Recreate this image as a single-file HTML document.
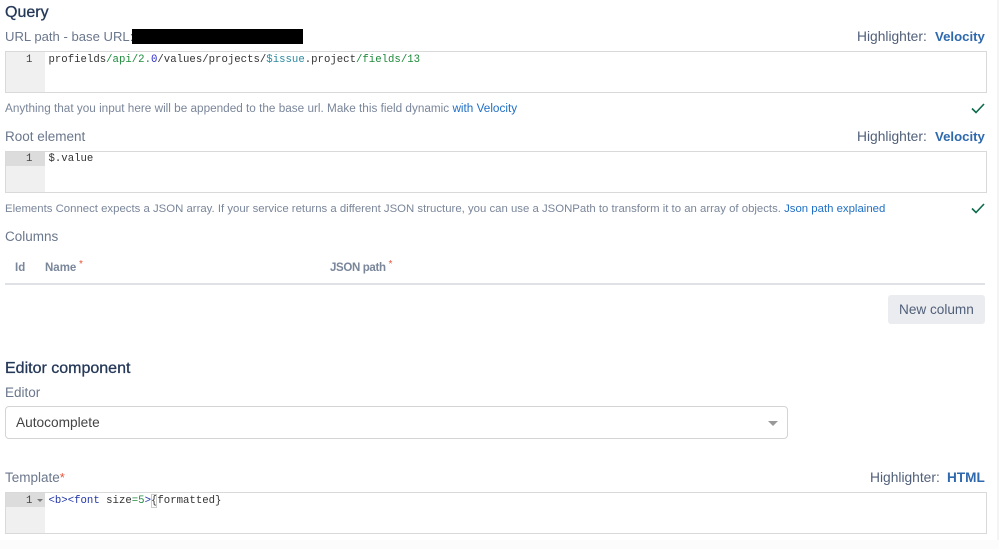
<!DOCTYPE html>
<html><head><meta charset="utf-8"><style>
html,body{margin:0;padding:0;background:#fff}
body{width:999px;height:549px;position:relative;overflow:hidden;font-family:"Liberation Sans",sans-serif}
.t{position:absolute;white-space:nowrap;line-height:16px}
.h{color:#253858;font-size:16px;font-weight:400;-webkit-text-stroke:.3px #253858}
.l{color:#6b778c;font-size:13.5px}
.d{color:#7a869a;font-size:11.75px}
.a{color:#1f6fc4}
.hl{color:#505f79;font-size:13.8px}
.v{color:#2f69ad;font-size:13.2px;font-weight:700}
.box{position:absolute;left:5px;width:980px;height:40px;border:1px solid #d9d9d9;background:#fff}
.gut{position:absolute;left:0;top:0;width:39px;height:40px;background:#f0f0f0}
.act{position:absolute;left:0;top:0;width:39px;height:14px;background:#dcdcdc}
.n{position:absolute;left:20px;top:0;font:10.67px/14px "Liberation Mono",monospace;color:#444}
.c{position:absolute;left:42.5px;top:0;font:10.67px/14px "Liberation Mono",monospace;color:#333;white-space:pre;letter-spacing:.01px}
.g{color:#1e8a3c}.b{color:#2a2ac8}.tl{color:#2b8a9e}.tg{color:#2236a8}
.th{color:#7a869a;font-size:11.5px;font-weight:700}
.r{color:#e8553a;font-size:10px}
</style></head><body>
<div style="position:absolute;left:997px;top:0;width:2px;height:549px;background:#f4f4f4"></div>
<div style="position:absolute;left:0;top:540px;width:999px;height:9px;background:#fcfcfc"></div>

<div class="t h" style="left:5px;top:5px">Query</div>
<div class="t l" style="left:5px;top:29px;font-size:13.1px">URL path - base URL:</div>
<div style="position:absolute;left:132px;top:29px;width:171px;height:15px;background:#000"></div>
<div class="t hl" style="left:857px;top:29px">Highlighter:</div>
<div class="t v" style="left:935px;top:29px">Velocity</div>
<div class="box" style="top:51px"><div class="gut"></div><div class="n" style="top:1px">1</div>
<div class="c" style="top:1px">profields<span class="g">/api/2.</span><span class="b">0</span>/values/projects/<span class="tl">$issue</span>.project<span class="g">/fields/13</span></div></div>
<div class="t d" style="left:5px;top:101px">Anything that you input here will be appended to the base url. Make this field dynamic <span class="a">with Velocity</span></div>
<svg style="position:absolute;left:970px;top:102px" width="16" height="12" viewBox="0 0 16 12"><path d="M2 6.5L6 10.5L14 2" fill="none" stroke="#0b6b4b" stroke-width="1.6"/></svg>

<div class="t l" style="left:5px;top:129px">Root element</div>
<div class="t hl" style="left:857px;top:129px">Highlighter:</div>
<div class="t v" style="left:935px;top:129px">Velocity</div>
<div class="box" style="top:151px"><div class="gut"></div><div class="act"></div><div class="n" style="top:0">1</div>
<div class="c" style="top:0">$.value</div></div>
<div class="t d" style="left:5px;top:201px;font-size:11.38px">Elements Connect expects a JSON array. If your service returns a different JSON structure, you can use a JSONPath to transform it to an array of objects. <span class="a">Json path explained</span></div>
<svg style="position:absolute;left:970px;top:202px" width="16" height="12" viewBox="0 0 16 12"><path d="M2 6.5L6 10.5L14 2" fill="none" stroke="#0b6b4b" stroke-width="1.6"/></svg>

<div class="t l" style="left:5px;top:229px">Columns</div>
<div class="t th" style="left:15px;top:260px">Id</div>
<div class="t th" style="left:45px;top:260px">Name</div>
<div class="t r" style="left:79px;top:257px">*</div>
<div class="t th" style="left:330px;top:260px;letter-spacing:-.35px">JSON path</div>
<div class="t r" style="left:388.5px;top:257px">*</div>
<div style="position:absolute;left:5px;top:283px;width:980px;height:2px;background:#dfe1e6"></div>
<div style="position:absolute;left:888px;top:295px;width:97px;height:29px;background:#ebecf0;border-radius:3px"></div>
<div class="t" style="left:899px;top:302px;color:#505f79;font-size:13.6px">New column</div>

<div class="t h" style="left:5px;top:361px">Editor component</div>
<div class="t l" style="left:5px;top:385px">Editor</div>
<div style="position:absolute;left:5px;top:406px;width:781px;height:31px;border:1px solid #d4d4d4;border-radius:4px;background:#fff"></div>
<div class="t" style="left:16px;top:415px;color:#444;font-size:13.7px">Autocomplete</div>
<div style="position:absolute;left:768px;top:421px;width:0;height:0;border-left:5px solid transparent;border-right:5px solid transparent;border-top:5px solid #999"></div>

<div class="t l" style="left:5px;top:470px">Template<span style="color:#e8553a;font-size:13px">*</span></div>
<div class="t hl" style="left:870px;top:470px">Highlighter:</div>
<div class="t v" style="left:947px;top:470px;font-size:13.6px">HTML</div>
<div class="box" style="top:492px"><div class="gut"></div><div class="act"></div><div class="n" style="top:1px">1</div>
<div style="position:absolute;left:31px;top:6px;width:0;height:0;border-left:3px solid transparent;border-right:3px solid transparent;border-top:3px solid #777"></div>
<div class="c" style="top:1px"><span class="tg">&lt;b&gt;&lt;font</span> size<span class="g">=5</span><span class="tg">&gt;</span>{formatted}</div>
<div style="position:absolute;left:145px;top:1px;width:6px;height:14px;border:1px solid #ccc;box-sizing:border-box"></div></div>
</body></html>
